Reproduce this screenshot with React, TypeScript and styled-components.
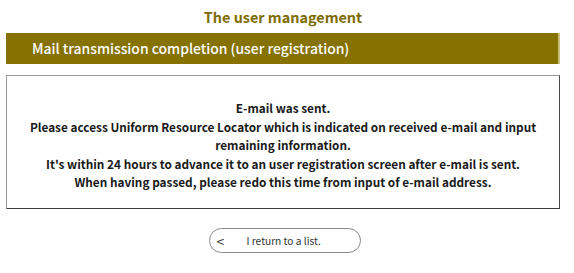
import styled, { createGlobalStyle } from "styled-components";

const GlobalStyle = createGlobalStyle`
  body {
    margin: 0;
    background: #ffffff;
    font-family: "Noto Sans CJK JP", "Noto Sans", sans-serif;
  }
`;

const Page = styled.div`
  width: 554px;
  padding: 6px 14px 0 6px;
  display: flex;
  flex-direction: column;
  align-items: stretch;
`;

const Title = styled.h1`
  margin: 0;
  height: 21px;
  text-align: center;
  font-size: 14.4px;
  line-height: 21px;
  font-weight: 700;
  color: #7d6b00;
`;

const Bar = styled.h2`
  margin: 6px 0 0;
  height: 31px;
  padding: 0 0 0 26px;
  background: #857200;
  border-right: 2px solid #c9bf7c;
  color: #ffffff;
  font-size: 13.9px;
  font-weight: 500;
  line-height: 31px;
`;

const Box = styled.div`
  margin-top: 11px;
  height: 132px;
  border: 1px solid #9a9a9a;
  border-bottom-color: #3c3c3c;
  border-right-color: #4a4a4a;
  display: flex;
  align-items: center;
  justify-content: center;
`;

const Message = styled.p`
  margin: 7px 0 0;
  text-align: center;
  font-size: 11.8px;
  line-height: 18.5px;
  font-weight: 700;
  color: #1a1a1a;
`;

const Footer = styled.div`
  display: flex;
  justify-content: center;
  padding-top: 19px;
`;

const BackButton = styled.button`
  width: 152px;
  height: 25px;
  margin-left: 3px;
  border: 1px solid #8a8a8a;
  border-radius: 13px;
  background: #ffffff;
  font-family: inherit;
  font-size: 10.2px;
  color: #333333;
  display: flex;
  align-items: center;
  padding: 0 0 0 7px;
  cursor: pointer;
`;

const Chevron = styled.span`
  font-size: 14px;
  width: 26px;
  text-align: left;
  color: #333333;
`;

const Label = styled.span`
  margin-left: 4px;
`;

export default function App() {
  return (
    <>
      <GlobalStyle />
      <Page>
        <Title>The user management</Title>
        <Bar>Mail transmission completion (user registration)</Bar>
        <Box>
          <Message>
            E-mail was sent.
            <br />
            Please access Uniform Resource Locator which is indicated on received e-mail and input
            <br />
            remaining information.
            <br />
            It's within 24 hours to advance it to an user registration screen after e-mail is sent.
            <br />
            When having passed, please redo this time from input of e-mail address.
          </Message>
        </Box>
        <Footer>
          <BackButton>
            <Chevron>&lt;</Chevron>
            <Label>I return to a list.</Label>
          </BackButton>
        </Footer>
      </Page>
    </>
  );
}
